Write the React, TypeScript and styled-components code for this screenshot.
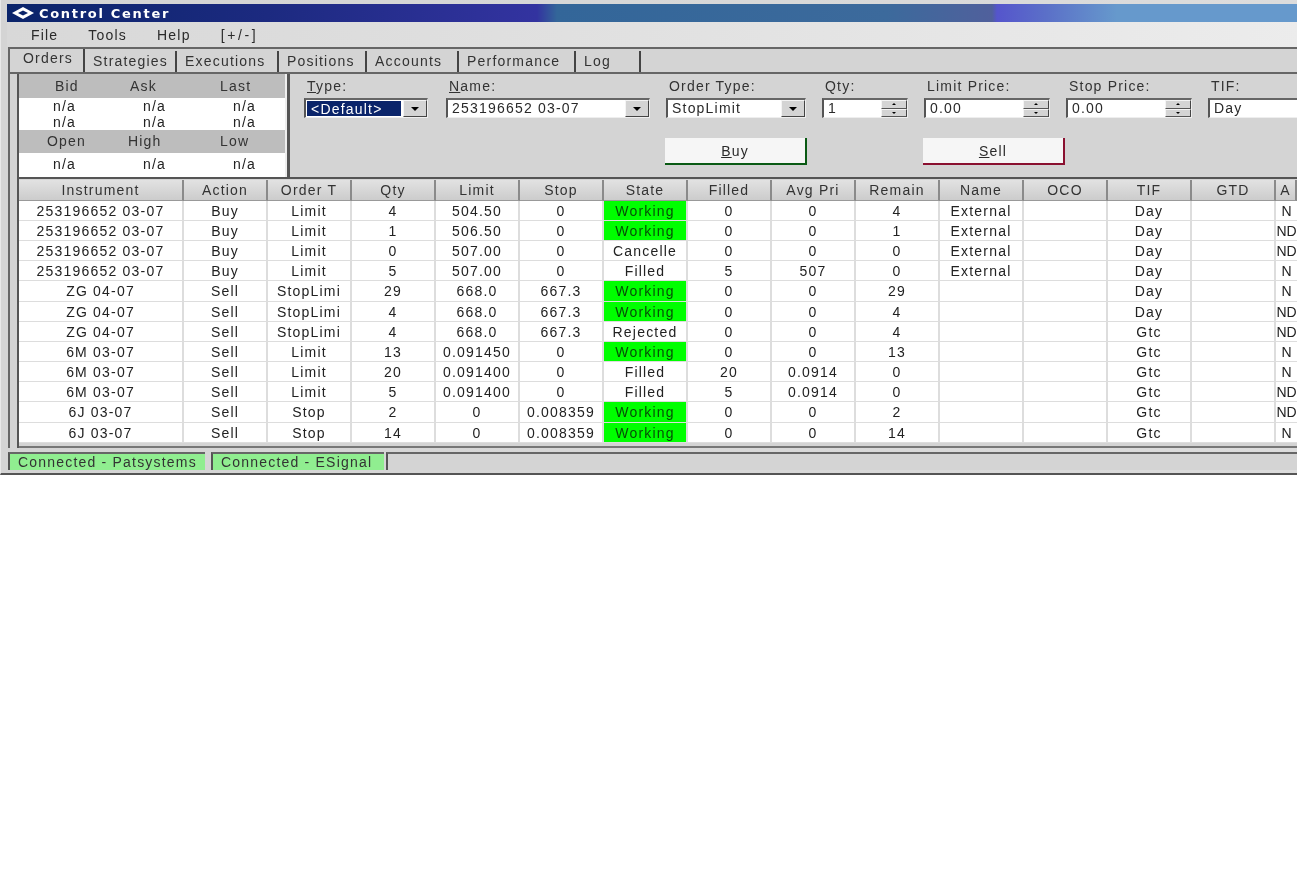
import styled, { createGlobalStyle } from "styled-components";

const GlobalStyle = createGlobalStyle`
  html, body {
    margin: 0;
    padding: 0;
    background: #fff;
  }
  body {
    font-family: "Liberation Sans", Arial, sans-serif;
    font-size: 14px;
    color: #2a2a2a;
    overflow: hidden;
  }
`;

const Page = styled.div`
  width: 1297px;
  height: 893px;
  overflow: hidden;
  background: #fff;
`;
const Window = styled.div`
  width: 1297px;
  height: 475px;
  box-sizing: border-box;
  padding: 4px 0 0 6px;
  background: linear-gradient(90deg, #d4d4d4 0, #d8d8d8 60%, #dcdcdc 100%);
  border-bottom: 2px solid #555;
  border-left: 1px solid #e8e8e8;
  letter-spacing: 1.2px;
  filter: blur(0.35px);
  overflow: hidden;
`;
const TitleBar = styled.div`
  height: 18px;
  display: flex;
  align-items: center;
  gap: 5px;
  padding-left: 5px;
  color: #fff;
  font-family: "DejaVu Sans", sans-serif;
  font-weight: 700;
  font-size: 13px;
  letter-spacing: 1.7px;
  background: linear-gradient(
    90deg,
    #0a246a 0,
    #1c2a80 260px,
    #3333a0 530px,
    #336699 550px,
    #3c6a9c 880px,
    #50609c 985px,
    #5555cc 990px,
    #5b70c8 1040px,
    #6699cc 1110px,
    #6699cc 1297px
  );
`;
const MenuBar = styled.div`
  height: 25px;
  display: flex;
  align-items: center;
  padding-left: 24px;
  gap: 30px;
  background: linear-gradient(90deg, #d8d8d8 0, #e2e2e2 700px, #ececec 1297px);
`;
const MenuItem = styled.span<{ $spacing?: number }>`
  letter-spacing: ${(p) => p.$spacing ?? 1.2}px;
`;
const Content = styled.div`
  border-top: 2px solid #666;
  border-left: 2px solid #666;
  background: #d4d4d4;
  margin-left: 1px;
`;
const TabStrip = styled.div`
  height: 23px;
  display: flex;
  align-items: flex-end;
  padding-left: 9px;
  border-bottom: 2px solid #666;
`;
const Tab = styled.div<{ $active?: boolean; $width: number }>`
  width: ${(p) => p.$width}px;
  height: ${(p) => (p.$active ? 23 : 21)}px;
  flex: none;
  box-sizing: border-box;
  padding-left: ${(p) => (p.$active ? 4 : 8)}px;
  line-height: ${(p) => (p.$active ? 19 : 21)}px;
  border-right: 2px solid #444;
  white-space: nowrap;
  color: #333;
`;
const Inner = styled.div`
  margin-left: 7px;
  border-left: 2px solid #555;
`;
const TopRow = styled.div`
  display: flex;
  height: 103px;
  border-bottom: 2px solid #555;
`;
const Quotes = styled.div`
  width: 268px;
  flex: none;
  box-sizing: border-box;
  border-right: 2px solid #eee;
  background: #fff;
`;
const QuoteRow = styled.div<{ $head?: boolean; $height: number; $cols: string; $pad: number }>`
  height: ${(p) => p.$height}px;
  line-height: ${(p) => p.$height}px;
  display: grid;
  grid-template-columns: ${(p) => p.$cols};
  padding-left: ${(p) => p.$pad}px;
  background: ${(p) => (p.$head ? "#bdbdbd" : "#fff")};
  color: ${(p) => (p.$head ? "#333" : "#222")};
`;
const OrderForm = styled.div`
  flex: 1;
  min-width: 0;
  border-left: 3px solid #555;
  padding: 3px 0 0 14px;
`;
const FieldRow = styled.div`
  display: flex;
  gap: 16px;
`;
const Field = styled.div<{ $width: number; $trail?: number }>`
  width: ${(p) => p.$width}px;
  flex: none;
  margin-right: ${(p) => p.$trail ?? 0}px;
`;
const FieldLabel = styled.div`
  height: 21px;
  line-height: 19px;
  padding-left: 3px;
  color: #333;
  white-space: nowrap;
`;
const InputBox = styled.div`
  height: 20px;
  box-sizing: border-box;
  display: flex;
  align-items: stretch;
  background: #fff;
  border-left: 2px solid #555;
  border-top: 2px solid #666;
  border-right: 1px solid #eee;
  border-bottom: 1px solid #eee;
`;
const InputText = styled.div<{ $selected?: boolean }>`
  flex: 1;
  min-width: 0;
  padding-left: 4px;
  line-height: 16px;
  white-space: nowrap;
  overflow: hidden;
  background: ${(p) => (p.$selected ? "#0a246a" : "transparent")};
  color: ${(p) => (p.$selected ? "#fff" : "#2a2a2a")};
  margin: ${(p) => (p.$selected ? "1px 0 1px 1px" : "0")};
`;
const DropButton = styled.div`
  width: 24px;
  flex: none;
  margin-left: 2px;
  background: #d4d4d4;
  border: 1px solid;
  border-color: #f4f4f4 #444 #444 #f4f4f4;
  display: flex;
  align-items: center;
  justify-content: center;
  box-sizing: border-box;
  &::after {
    content: "";
    border-left: 4px solid transparent;
    border-right: 4px solid transparent;
    border-top: 4px solid #000;
  }
`;
const Spinner = styled.div`
  width: 26px;
  flex: none;
  display: flex;
  flex-direction: column;
  background: #d4d4d4;
`;
const SpinPart = styled.div<{ $down?: boolean }>`
  flex: 1;
  display: flex;
  align-items: center;
  justify-content: center;
  border: 1px solid;
  border-color: #f4f4f4 #444 #555 #f4f4f4;
  &::after {
    content: "";
    border-left: 2px solid transparent;
    border-right: 2px solid transparent;
    ${(p) =>
      p.$down ? "border-top: 2px solid #000;" : "border-bottom: 2px solid #000;"}
  }
`;
const ButtonRow = styled.div`
  display: flex;
  gap: 116px;
  margin: 20px 0 0 361px;
`;
const ActionButton = styled.div<{ $edge: string }>`
  width: 142px;
  height: 27px;
  box-sizing: border-box;
  background: #f6f6f6;
  border-right: 2px solid ${(p) => p.$edge};
  border-bottom: 2px solid ${(p) => p.$edge};
  display: flex;
  align-items: center;
  justify-content: center;
`;
const Table = styled.div`
  display: grid;
  grid-template-columns: 165px repeat(13, 84px) 21px;
  background: #fff;
  margin-top: 1px;
`;
const HeadCell = styled.div`
  height: 21px;
  box-sizing: border-box;
  background: linear-gradient(180deg, #e2e2e2 0, #cccccc 100%);
  border-right: 2px solid #8a8a8a;
  border-bottom: 1px solid #999;
  text-align: center;
  line-height: 20px;
  color: #333;
  white-space: nowrap;
  overflow: hidden;
  &:last-of-type {
    border-right: none;
  }
`;
const Cell = styled.div<{ $working?: boolean; $tall?: boolean; $last?: boolean }>`
  height: ${(p) => (p.$tall ? 21 : 20)}px;
  box-sizing: border-box;
  border-right: ${(p) => (p.$last ? "none" : "2px solid #ddd")};
  border-bottom: 1px solid #ddd;
  text-align: center;
  line-height: 20px;
  letter-spacing: ${(p) => (p.$last ? 0 : 1.2)}px;
  color: ${(p) => (p.$working ? "#064f06" : "#222")};
  white-space: nowrap;
  overflow: hidden;
  background: ${(p) => (p.$working ? "#00ff00" : "#fff")};
`;
const BottomEdge = styled.div`
  height: 2px;
  background: #777;
  margin-top: 3px;
`;
const StatusBar = styled.div`
  display: flex;
  height: 18px;
  gap: 2px;
  margin: 4px 0 0 1px;
`;
const StatusPanel = styled.div<{ $ok?: boolean; $width?: number; $trail?: number }>`
  width: ${(p) => (p.$width ? `${p.$width}px` : "auto")};
  flex: ${(p) => (p.$width ? "none" : 1)};
  margin-right: ${(p) => p.$trail ?? 0}px;
  box-sizing: border-box;
  border-left: 2px solid #555;
  border-top: 2px solid #666;
  background: ${(p) => (p.$ok ? "#90ee90" : "#d4d4d4")};
  padding-left: 8px;
  line-height: 16px;
  white-space: nowrap;
  overflow: hidden;
  color: #333;
`;

const tabs: [string, number][] = [
  ["Strategies", 92],
  ["Executions", 102],
  ["Positions", 88],
  ["Accounts", 92],
  ["Performance", 117],
  ["Log", 65],
];

const columns = [
  "Instrument", "Action", "Order T", "Qty", "Limit", "Stop", "State", "Filled",
  "Avg Pri", "Remain", "Name", "OCO", "TIF", "GTD", "A",
];

const rows: string[][] = [
  ["253196652 03-07", "Buy", "Limit", "4", "504.50", "0", "Working", "0", "0", "4", "External", "", "Day", "", "N"],
  ["253196652 03-07", "Buy", "Limit", "1", "506.50", "0", "Working", "0", "0", "1", "External", "", "Day", "", "ND"],
  ["253196652 03-07", "Buy", "Limit", "0", "507.00", "0", "Cancelle", "0", "0", "0", "External", "", "Day", "", "ND"],
  ["253196652 03-07", "Buy", "Limit", "5", "507.00", "0", "Filled", "5", "507", "0", "External", "", "Day", "", "N"],
  ["ZG 04-07", "Sell", "StopLimi", "29", "668.0", "667.3", "Working", "0", "0", "29", "", "", "Day", "", "N"],
  ["ZG 04-07", "Sell", "StopLimi", "4", "668.0", "667.3", "Working", "0", "0", "4", "", "", "Day", "", "ND"],
  ["ZG 04-07", "Sell", "StopLimi", "4", "668.0", "667.3", "Rejected", "0", "0", "4", "", "", "Gtc", "", "ND"],
  ["6M 03-07", "Sell", "Limit", "13", "0.091450", "0", "Working", "0", "0", "13", "", "", "Gtc", "", "N"],
  ["6M 03-07", "Sell", "Limit", "20", "0.091400", "0", "Filled", "20", "0.0914", "0", "", "", "Gtc", "", "N"],
  ["6M 03-07", "Sell", "Limit", "5", "0.091400", "0", "Filled", "5", "0.0914", "0", "", "", "Gtc", "", "ND"],
  ["6J 03-07", "Sell", "Stop", "2", "0", "0.008359", "Working", "0", "0", "2", "", "", "Gtc", "", "ND"],
  ["6J 03-07", "Sell", "Stop", "14", "0", "0.008359", "Working", "0", "0", "14", "", "", "Gtc", "", "N"],
];

const valueCols = "90px 90px 86px";

const LogoIcon = () => (
  <svg width="22" height="12" viewBox="0 0 22 12">
    <path d="M11 0 L22 6 L11 12 L0 6 Z" fill="#fff" />
    <path d="M11 3.5 L16 6 L11 8.5 L6 6 Z" fill="#0a246a" />
  </svg>
);

const App = () => {
  return (
    <Page>
      <GlobalStyle />
      <Window>
        <TitleBar>
          <LogoIcon />
          Control Center
        </TitleBar>
        <MenuBar>
          <MenuItem>File</MenuItem>
          <MenuItem>Tools</MenuItem>
          <MenuItem>Help</MenuItem>
          <MenuItem $spacing={2.6}>[+/-]</MenuItem>
        </MenuBar>
        <Content>
          <TabStrip>
            <Tab $active $width={66}>Orders</Tab>
            {tabs.map(([label, width]) => (
              <Tab key={label} $width={width}>{label}</Tab>
            ))}
          </TabStrip>
          <Inner>
            <TopRow>
              <Quotes>
                <QuoteRow $head $height={24} $cols="75px 90px auto" $pad={36}>
                  <span>Bid</span><span>Ask</span><span>Last</span>
                </QuoteRow>
                <QuoteRow $height={17} $cols={valueCols} $pad={34}>
                  <span>n/a</span><span>n/a</span><span>n/a</span>
                </QuoteRow>
                <QuoteRow $height={15} $cols={valueCols} $pad={34}>
                  <span>n/a</span><span>n/a</span><span>n/a</span>
                </QuoteRow>
                <QuoteRow $head $height={23} $cols="81px 92px auto" $pad={28}>
                  <span>Open</span><span>High</span><span>Low</span>
                </QuoteRow>
                <QuoteRow $height={22} $cols={valueCols} $pad={34}>
                  <span>n/a</span><span>n/a</span><span>n/a</span>
                </QuoteRow>
              </Quotes>
              <OrderForm>
                <FieldRow>
                  <Field $width={124} $trail={2}>
                    <FieldLabel><u>T</u>ype:</FieldLabel>
                    <InputBox>
                      <InputText $selected>&lt;Default&gt;</InputText>
                      <DropButton />
                    </InputBox>
                  </Field>
                  <Field $width={204}>
                    <FieldLabel><u>N</u>ame:</FieldLabel>
                    <InputBox>
                      <InputText>253196652 03-07</InputText>
                      <DropButton />
                    </InputBox>
                  </Field>
                  <Field $width={140}>
                    <FieldLabel>Order Type:</FieldLabel>
                    <InputBox>
                      <InputText>StopLimit</InputText>
                      <DropButton />
                    </InputBox>
                  </Field>
                  <Field $width={86}>
                    <FieldLabel>Qty:</FieldLabel>
                    <InputBox>
                      <InputText>1</InputText>
                      <Spinner><SpinPart /><SpinPart $down /></Spinner>
                    </InputBox>
                  </Field>
                  <Field $width={126}>
                    <FieldLabel>Limit Price:</FieldLabel>
                    <InputBox>
                      <InputText>0.00</InputText>
                      <Spinner><SpinPart /><SpinPart $down /></Spinner>
                    </InputBox>
                  </Field>
                  <Field $width={126}>
                    <FieldLabel>Stop Price:</FieldLabel>
                    <InputBox>
                      <InputText>0.00</InputText>
                      <Spinner><SpinPart /><SpinPart $down /></Spinner>
                    </InputBox>
                  </Field>
                  <Field $width={126}>
                    <FieldLabel>TIF:</FieldLabel>
                    <InputBox>
                      <InputText>Day</InputText>
                      <DropButton />
                    </InputBox>
                  </Field>
                </FieldRow>
                <ButtonRow>
                  <ActionButton $edge="#0a5a14"><span><u>B</u>uy</span></ActionButton>
                  <ActionButton $edge="#8a1030"><span><u>S</u>ell</span></ActionButton>
                </ButtonRow>
              </OrderForm>
            </TopRow>
            <Table>
              {columns.map((c) => (
                <HeadCell key={c}>{c}</HeadCell>
              ))}
              {rows.map((row, r) =>
                row.map((value, c) => (
                  <Cell
                    key={`${r}-${c}`}
                    $working={value === "Working"}
                    $tall={r === 4 || r === 10}
                    $last={c === row.length - 1}
                  >
                    {value}
                  </Cell>
                ))
              )}
            </Table>
            <BottomEdge />
          </Inner>
        </Content>
        <StatusBar>
          <StatusPanel $ok $width={197} $trail={4}>Connected - Patsystems</StatusPanel>
          <StatusPanel $ok $width={173}>Connected - ESignal</StatusPanel>
          <StatusPanel />
        </StatusBar>
      </Window>
    </Page>
  );
};

export default App;
